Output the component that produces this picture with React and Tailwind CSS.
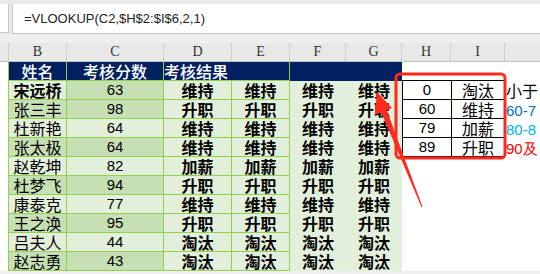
import React from 'react';

const rows = [
  { name: '宋远桥', score: 63, res: '维持', bold: true },
  { name: '张三丰', score: 98, res: '升职' },
  { name: '杜新艳', score: 64, res: '维持' },
  { name: '张太极', score: 64, res: '维持' },
  { name: '赵乾坤', score: 82, res: '加薪' },
  { name: '杜梦飞', score: 94, res: '升职' },
  { name: '康泰克', score: 77, res: '维持' },
  { name: '王之涣', score: 95, res: '升职' },
  { name: '吕夫人', score: 44, res: '淘汰' },
  { name: '赵志勇', score: 43, res: '淘汰' },
];

const lookup = [
  { min: '0', res: '淘汰', note: '小于', color: 'text-black' },
  { min: '60', res: '维持', note: '60-7', color: 'text-[#0070c0]' },
  { min: '79', res: '加薪', note: '80-8', color: 'text-[#00b0f0]' },
  { min: '89', res: '升职', note: '90及', color: 'text-[#ff0000]' },
];

const cols = [
  { l: 'B', w: 'w-[58px]' },
  { l: 'C', w: 'w-[97px]' },
  { l: 'D', w: 'w-[68px]' },
  { l: 'E', w: 'w-[58px]' },
  { l: 'F', w: 'w-[56px]' },
  { l: 'G', w: 'w-[56px]' },
  { l: 'H', w: 'w-[49px]' },
  { l: 'I', w: 'w-[54px]' },
];

const cjk = "font-['Noto_Sans_CJK_SC',sans-serif]";
const num = "font-['Liberation_Sans',sans-serif] text-[15px]";

function Row({ r, i }) {
  const dark = i % 2 === 1;
  const bBg = dark ? 'bg-[#c6e0b4]' : 'bg-[#e2efda]';
  const cBg = dark || i === 0 ? 'bg-[#c6e0b4]' : 'bg-[#e2efda]';
  const lk = lookup[i];
  return (
    <div className="flex h-[19px] leading-[18px]">
      <div className="w-[9px] shrink-0 bg-white border-r border-[#92d050]" />
      <div className={`w-[58px] shrink-0 ${bBg} border-r border-b border-[#92d050] text-center text-[16px] ${r.bold ? 'font-bold' : ''}`}>
        {r.name}
      </div>
      <div className={`w-[97px] shrink-0 ${cBg} border-r border-b border-[#92d050] text-center ${num}`}>
        {r.score}
      </div>
      <div className="w-[68px] shrink-0 bg-[#e2efda] border-r border-b border-[#92d050] text-center text-[16px] font-bold">
        {r.res}
      </div>
      <div className="w-[58px] shrink-0 bg-[#e2efda] border-r border-b border-[#92d050] text-center text-[16px] font-bold">
        {r.res}
      </div>
      <div className="w-[56px] shrink-0 bg-[#e2efda] text-center text-[16px] font-bold">{r.res}</div>
      <div className="w-[56px] shrink-0 bg-[#e2efda] text-center text-[16px] font-bold">{r.res}</div>
      {lk ? (
        <>
          <div className={`w-[49px] shrink-0 bg-white border-l border-b border-black text-center ${num}`}>
            {lk.min}
          </div>
          <div className="w-[54px] shrink-0 bg-white border-l border-r border-b border-black text-center text-[16px]">
            {lk.res}
          </div>
          <div className={`flex-1 bg-white pl-[1px] text-[16px] whitespace-nowrap overflow-hidden ${lk.color}`}>
            <span className={/\d/.test(lk.note) ? "font-['Liberation_Sans',sans-serif] text-[15px]" : ''}>{lk.note}</span>
          </div>
        </>
      ) : (
        <div className="flex-1 bg-white" />
      )}
    </div>
  );
}

export default function App() {
  return (
    <div className={`relative w-[540px] h-[274px] overflow-hidden bg-[#efefef] ${cjk} text-black`}>
      {/* formula bar */}
      <div className="flex pt-[4px] h-[34px] bg-[#e9e9e9]">
        <div className="w-[9px] h-[29px] bg-white border-r border-b border-[#c6c6c6]" />
        <div className="w-[3px]" />
        <div className="flex-1 h-[30px] bg-white border-l border-b border-[#c6c6c6] pl-[11px] flex items-center font-['Liberation_Sans',sans-serif] text-[13px] text-[#222]">
          =VLOOKUP(C2,$H$2:$I$6,2,1)
        </div>
      </div>
      <div className="h-[9px] bg-[#efefef]" />

      {/* column header */}
      <div className="flex h-[19px] bg-[#e8e8e8] border-b border-[#c0c0c0] font-['Liberation_Serif',serif] text-[14px] leading-[18px] text-[#333]">
        <div className="w-[9px] shrink-0 border-r border-[#cfcfcf]" />
        {cols.map((c) => (
          <div key={c.l} className={`${c.w} shrink-0 border-r border-[#cfcfcf] text-center`}>
            {c.l}
          </div>
        ))}
        <div className="flex-1" />
      </div>

      {/* table header */}
      <div className="flex h-[19px] leading-[18px] text-[16px] font-medium text-white">
        <div className="w-[9px] shrink-0 bg-white border-r border-[#92d050]" />
        <div className="w-[58px] shrink-0 bg-[#002060] border-r border-b border-[#92d050] text-center">姓名</div>
        <div className="w-[97px] shrink-0 bg-[#002060] border-r border-b border-[#92d050] text-center">考核分数</div>
        <div className="w-[68px] shrink-0 bg-[#002060] border-b border-[#92d050] whitespace-nowrap">考核结果</div>
        <div className="w-[58px] shrink-0 bg-[#002060] border-r border-b border-[#92d050]" />
        <div className="w-[56px] shrink-0 bg-[#002060]" />
        <div className="w-[56px] shrink-0 bg-[#002060]" />
        <div className="w-[49px] shrink-0 bg-white border-b border-black" />
        <div className="w-[54px] shrink-0 bg-white border-b border-black" />
        <div className="flex-1 bg-white" />
      </div>

      {rows.map((r, i) => (
        <Row key={r.name} r={r} i={i} />
      ))}

      {/* annotation overlay */}
      <svg className="absolute left-0 top-0 pointer-events-none" width="540" height="274" viewBox="0 0 540 274">
        <rect x="396" y="74" width="109" height="84" rx="4" fill="none" stroke="#ff2a1f" strokeWidth="3" />
        <polygon points="377,92 392,108 375,115" fill="#ff2a1f" />
        <polygon points="386.5,109.5 381,111.8 421.5,207.2 422.5,206.8" fill="#ff2a1f" />
      </svg>
    </div>
  );
}
